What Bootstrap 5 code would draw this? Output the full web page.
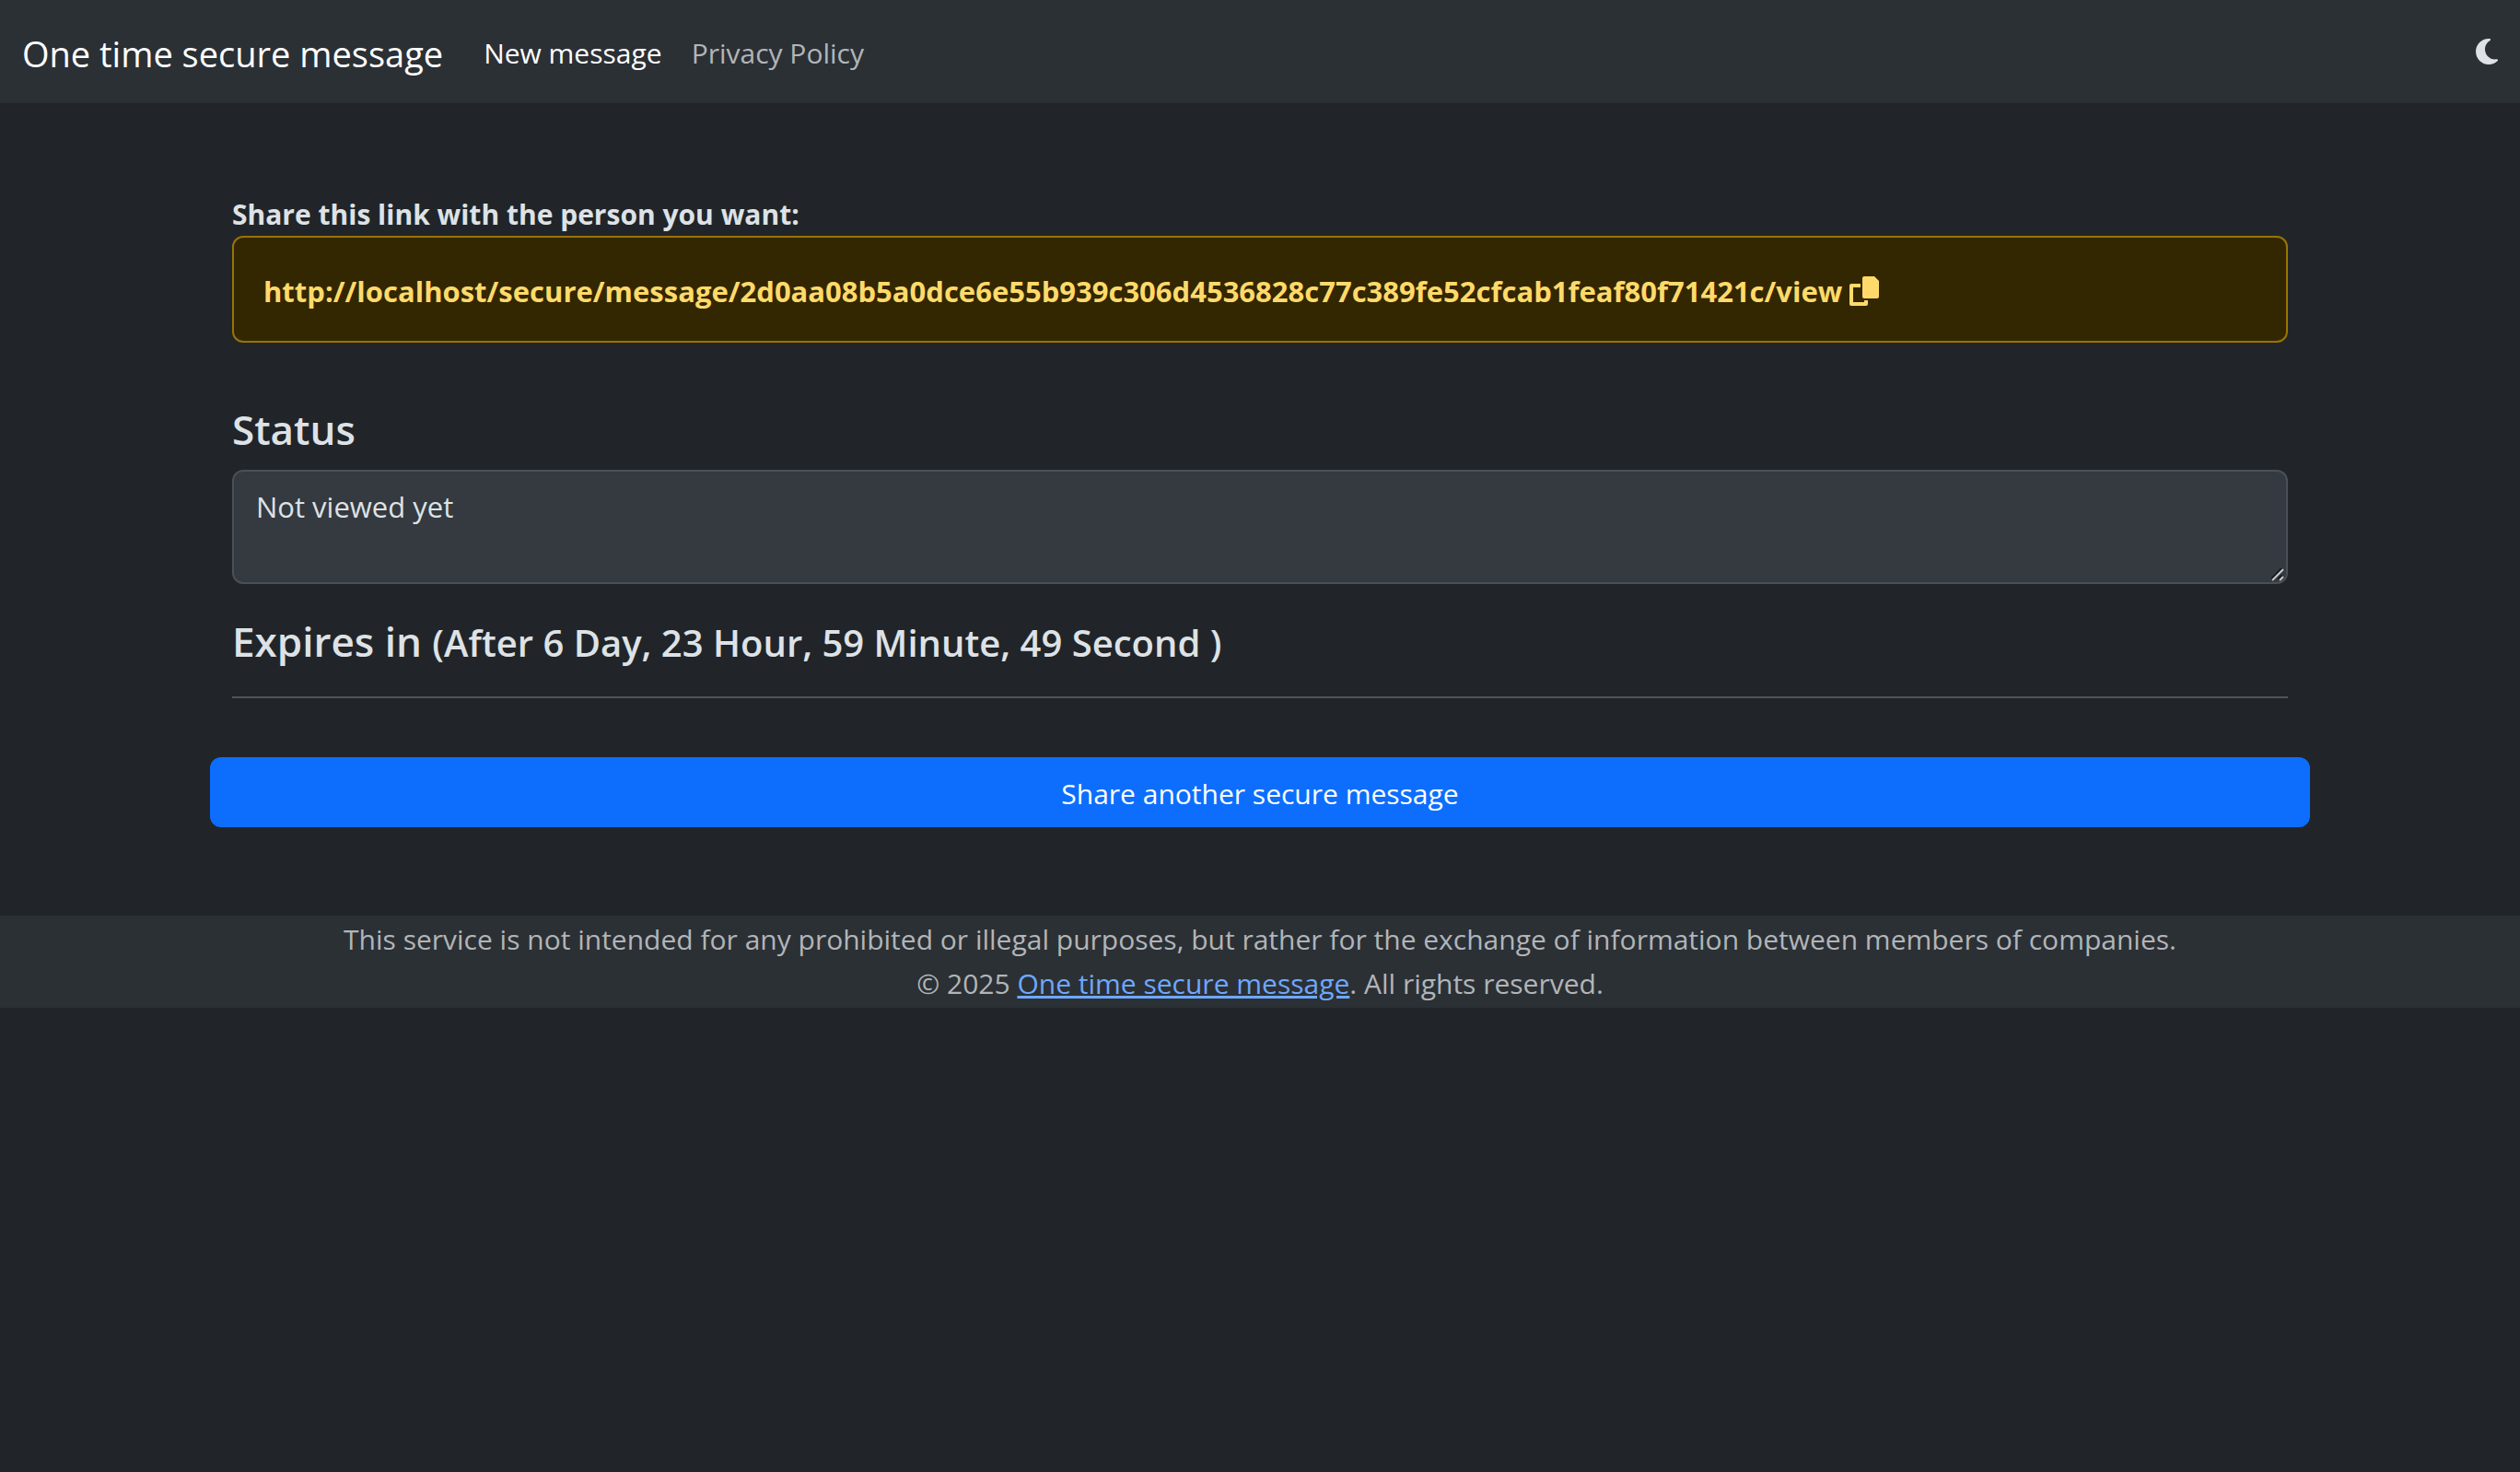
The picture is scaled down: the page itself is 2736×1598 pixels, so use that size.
<!DOCTYPE html>
<html lang="en" data-bs-theme="dark">
<head>
<meta charset="utf-8">
<meta name="viewport" content="width=device-width, initial-scale=1">
<title>One time secure message</title>
<link href="https://cdn.jsdelivr.net/npm/bootstrap@5.3.0/dist/css/bootstrap.min.css" rel="stylesheet">
<style>
  html { font-size: 32px; }
  body {
    font-family: "Open Sans", "Noto Sans", sans-serif;
    font-size: 30px;
    line-height: 48px;
    color: #dee2e6;
    background: #212529;
  }
  .bar-surface { background: #2b3035; }
  .site-nav { --bs-navbar-padding-y: 16px; }
  .site-nav .container-fluid { padding: 0 24px; }
  .site-nav .navbar-brand { font-size: 38px; line-height: 60px; padding: 12px 0 8px; margin-right: 28px; color: #fff; }
  .site-nav .nav-link { padding: 18px 16px 14px; color: #b2b5b8; }
  .site-nav .nav-link.active { color: #fff; }
  .theme-toggle { color: #dee2e6; line-height: 0; }
  .page-wrap { max-width: 2280px; padding: 96px 0; }
  .details { padding: 0 24px; }
  .link-label { padding-top: 2px; line-height: 46px; }
  .link-box {
    color: #ffda6a; background: #332701; border: 2px solid #997404;
    border-radius: 12px; padding: 34px 32px 30px; margin-bottom: 64px;
    font-size: 31px;
  }
  .link-box svg, .theme-toggle svg { fill: currentColor; }
  .link-box svg { vertical-align: -4px; }
  .section-title { font-size: 44px; line-height: 56px; font-weight: 600; padding-top: 2px; margin-bottom: 16px; color: #dee2e6; }
  .section-title small { font-size: 40px; line-height: 1; }
  .status-box {
    font-size: 31px; line-height: 48px; height: 124px; padding: 14px 24px 10px;
    border: 2px solid #495057; border-radius: 12px; resize: none; overflow: hidden;
    color: #dee2e6; background: #343a40;
  }
  .grip { right: 4px; bottom: 3px; }
  .divider { border-top: 2px solid #dee2e6; opacity: .25; margin: 32px 0 64px; }
  .share-btn { font-size: 30px; line-height: 48px; padding: 14px 24px 10px; border: 2px solid #0d6efd; border-radius: 12px; background: #0d6efd; color: #fff; }
  .site-footer { color: #b2b5b8; padding: 2px 0; }
  .site-footer a { color: #6ea8fe; text-decoration-thickness: 3px; }
</style>
</head>
<body>
<nav class="navbar navbar-expand site-nav bar-surface">
  <div class="container-fluid">
    <a class="navbar-brand" href="#">One time secure message</a>
    <ul class="navbar-nav me-auto">
      <li class="nav-item"><a class="nav-link active" aria-current="page" href="#">New message</a></li>
      <li class="nav-item"><a class="nav-link" href="#">Privacy Policy</a></li>
    </ul>
    <button type="button" class="theme-toggle btn border-0 p-0" aria-label="Toggle theme">
      <svg width="24" height="32" viewBox="0 0 384 512" aria-hidden="true"><path d="M223.5 32C100 32 0 132.3 0 256S100 480 223.5 480c60.6 0 115.5-24.2 155.8-63.4c5-4.9 6.3-12.5 3.1-18.7s-10.1-9.7-17-8.5c-9.8 1.7-19.8 2.6-30.1 2.6c-96.9 0-175.5-78.8-175.5-176c0-65.8 36-123.1 89.3-153.3c6.1-3.5 9.2-10.5 7.7-17.3s-7.3-11.9-14.3-12.5c-6.3-.5-12.6-.8-19-.8z"/></svg>
    </button>
  </div>
</nav>

<main class="container-fluid page-wrap">
  <section class="details">
    <div class="link-label fw-bold">Share this link with the person you want:</div>
    <div class="link-box fw-bold" role="alert">
      http://localhost/secure/message/2d0aa08b5a0dce6e55b939c306d4536828c77c389fe52cfcab1feaf80f71421c/view
      <svg width="32" height="32" viewBox="0 0 32 32" aria-hidden="true"><path d="M16 0h11l5 5v17a2 2 0 0 1-2 2H16a2 2 0 0 1-2-2V2a2 2 0 0 1 2-2z"/><path d="M2 8h10v4H4v16h12v-2h4v4a2 2 0 0 1-2 2H2a2 2 0 0 1-2-2V10a2 2 0 0 1 2-2z"/></svg>
    </div>
    <label class="section-title d-block" for="status">Status</label>
    <div class="position-relative mb-3">
      <textarea class="form-control status-box" id="status" rows="2" readonly>Not viewed yet</textarea>
      <svg class="grip position-absolute" width="14" height="14" viewBox="0 0 14 14" fill="none" aria-hidden="true"><path d="M0 12L12 0M8 12l4-4" stroke="#15181c" stroke-width="3"/><path d="M1 13L13 1M9 13l4-4" stroke="#c8cbce" stroke-width="2"/></svg>
    </div>
    <h4 class="section-title">Expires in <small>(After 6 Day, 23 Hour, 59 Minute, 49 Second )</small></h4>
    <hr class="divider">
  </section>
  <button type="button" class="btn btn-primary share-btn d-block w-100">Share another secure message</button>
</main>

<footer class="site-footer bar-surface text-center">
  <div>This service is not intended for any prohibited or illegal purposes, but rather for the exchange of information between members of companies.</div>
  <div>© 2025 <a href="#">One time secure message</a>. All rights reserved.</div>
</footer>
<script src="https://cdn.jsdelivr.net/npm/bootstrap@5.3.0/dist/js/bootstrap.bundle.min.js"></script>
</body>
</html>
